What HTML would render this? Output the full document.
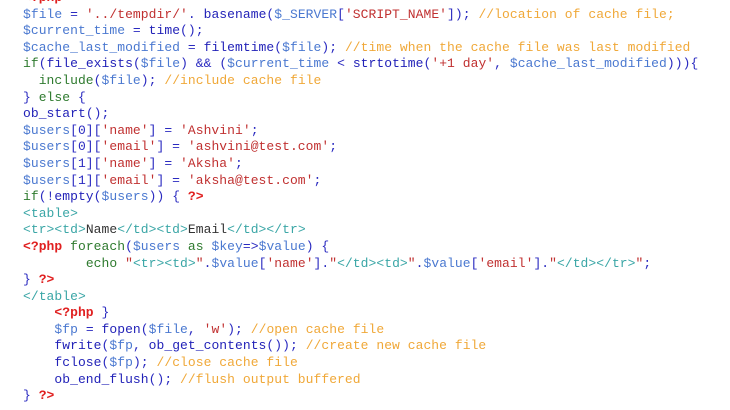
<!DOCTYPE html>
<html><head><meta charset="utf-8"><style>
html,body{margin:0;padding:0;background:#fff;width:730px;height:410px;overflow:hidden}
pre{position:absolute;left:23px;top:-10px;margin:0;font-family:"Liberation Mono",monospace;font-size:13px;letter-spacing:0.05px;line-height:16.6px;color:#2a2ac0}
.v{color:#4a78d0}.f{color:#2222b8}.s{color:#c03030}.c{color:#f0a838}.k{color:#2e7a2e}.t{color:#3aa6a6}.p{color:#e02020;font-weight:bold}.d{color:#333}.o{color:#2a2ac0}
</style></head><body><pre><span class="p">&lt;?php</span>
<span class="v">$file</span> = <span class="s">'../tempdir/'</span>. <span class="f">basename</span>(<span class="v">$_SERVER</span>[<span class="s">'SCRIPT_NAME'</span>]); <span class="c">//location of cache file;</span>
<span class="v">$current_time</span> = <span class="f">time</span>();
<span class="v">$cache_last_modified</span> = <span class="f">filemtime</span>(<span class="v">$file</span>); <span class="c">//time when the cache file was last modified</span>
<span class="k">if</span>(<span class="f">file_exists</span>(<span class="v">$file</span>) &amp;&amp; (<span class="v">$current_time</span> &lt; <span class="f">strtotime</span>(<span class="s">'+1 day'</span>, <span class="v">$cache_last_modified</span>))){
  <span class="k">include</span>(<span class="v">$file</span>); <span class="c">//include cache file</span>
} <span class="k">else</span> {
<span class="f">ob_start</span>();
<span class="v">$users</span>[0][<span class="s">'name'</span>] = <span class="s">'Ashvini'</span>;
<span class="v">$users</span>[0][<span class="s">'email'</span>] = <span class="s">'ashvini@test.com'</span>;
<span class="v">$users</span>[1][<span class="s">'name'</span>] = <span class="s">'Aksha'</span>;
<span class="v">$users</span>[1][<span class="s">'email'</span>] = <span class="s">'aksha@test.com'</span>;
<span class="k">if</span>(!<span class="f">empty</span>(<span class="v">$users</span>)) { <span class="p">?&gt;</span>
<span class="t">&lt;table&gt;</span>
<span class="t">&lt;tr&gt;&lt;td&gt;</span><span class="d">Name</span><span class="t">&lt;/td&gt;&lt;td&gt;</span><span class="d">Email</span><span class="t">&lt;/td&gt;&lt;/tr&gt;</span>
<span class="p">&lt;?php</span> <span class="k">foreach</span>(<span class="v">$users</span> <span class="k">as</span> <span class="v">$key</span>=&gt;<span class="v">$value</span>) {
        <span class="k">echo</span> <span class="s">"</span><span class="t">&lt;tr&gt;&lt;td&gt;</span><span class="s">"</span>.<span class="v">$value</span>[<span class="s">'name'</span>].<span class="s">"</span><span class="t">&lt;/td&gt;&lt;td&gt;</span><span class="s">"</span>.<span class="v">$value</span>[<span class="s">'email'</span>].<span class="s">"</span><span class="t">&lt;/td&gt;&lt;/tr&gt;</span><span class="s">"</span>;
} <span class="p">?&gt;</span>
<span class="t">&lt;/table&gt;</span>
    <span class="p">&lt;?php</span> }
    <span class="v">$fp</span> = <span class="f">fopen</span>(<span class="v">$file</span>, <span class="s">'w'</span>); <span class="c">//open cache file</span>
    <span class="f">fwrite</span>(<span class="v">$fp</span>, <span class="f">ob_get_contents</span>()); <span class="c">//create new cache file</span>
    <span class="f">fclose</span>(<span class="v">$fp</span>); <span class="c">//close cache file</span>
    <span class="f">ob_end_flush</span>(); <span class="c">//flush output buffered</span>
} <span class="p">?&gt;</span>
</pre></body></html>
